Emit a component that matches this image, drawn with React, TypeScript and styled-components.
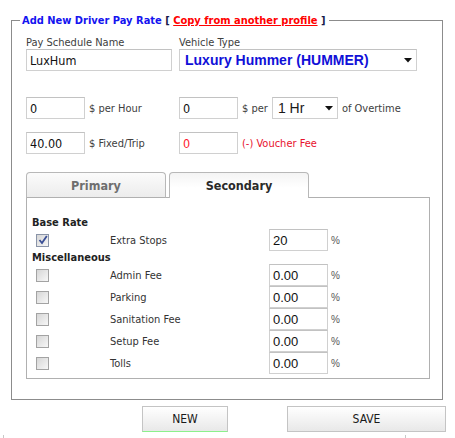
import React from "react";
import styled, { createGlobalStyle } from "styled-components";

const T = '"DejaVu Sans Condensed", "DejaVu Sans", sans-serif';
const A = '"Liberation Sans", Arial, sans-serif';

const Global = createGlobalStyle`
  html, body { margin: 0; padding: 0; background: #fff; }
  body { font-family: ${T}; font-size: 11px; color: #333; }
  * { box-sizing: border-box; }
`;

const Page = styled.div`
  width: 455px;
  height: 438px;
  overflow: hidden;
  padding: 13px 0 0 11px;
`;

const Frame = styled.fieldset`
  margin: 0;
  width: 432px;
  min-width: 0;
  border: 1px solid #8c8c8c;
  padding: 8px 12px 20px 14px;
`;

const Legend = styled.legend`
  font-family: ${T};
  font-weight: bold;
  font-size: 11px;
  line-height: 15px;
  padding: 0 3px 0 2px;
  margin-left: -6px;
  color: #1414f0;
`;

const Bracket = styled.span`
  color: #1a1a4a;
`;

const CopyLink = styled.a`
  color: #ff0000;
  text-decoration: underline;
  cursor: pointer;
`;

const Row = styled.div<{ $top?: number }>`
  display: grid;
  grid-template-columns: 153px 1fr;
  margin-top: ${(p) => p.$top ?? 0}px;
`;

const Field = styled.div`
  display: flex;
  flex-direction: column;
`;

const Cell = styled.div`
  display: flex;
  align-items: center;
  gap: 4px;
`;

const Label = styled.label<{ $red?: boolean }>`
  font-size: 11px;
  line-height: 13px;
  color: ${(p) => (p.$red ? "#e8112d" : "#404040")};
  white-space: nowrap;
`;

const TextInput = styled.input<{ $w: number; $red?: boolean }>`
  width: ${(p) => p.$w}px;
  height: 22px;
  margin: 0;
  border: 1px solid #d0d0d0;
  border-top-color: #c2c2c2;
  padding: 0 3px;
  font-family: ${T};
  font-size: 12.5px;
  color: ${(p) => (p.$red ? "#ff1a2e" : "#111")};
  background: #fff;
  outline: none;
`;

const SelectBox = styled.div<{ $w: number; $strong?: boolean }>`
  width: ${(p) => p.$w}px;
  height: 22px;
  border: 1px solid #d0d0d0;
  border-top-color: #c2c2c2;
  display: flex;
  align-items: center;
  justify-content: space-between;
  padding: 0 4px 0 5px;
  font-family: ${A};
  font-size: 14px;
  font-weight: ${(p) => (p.$strong ? "bold" : "normal")};
  color: ${(p) => (p.$strong ? "#1010d8" : "#1a1a1a")};
  white-space: nowrap;
  background: #fff;
`;

const Caret = () => (
  <svg width="8" height="5" viewBox="0 0 8 5">
    <path d="M0 0 H8 L4 4.5 Z" fill="#111" />
  </svg>
);

const TabBar = styled.div`
  display: flex;
  gap: 3px;
  margin-top: 18px;
  margin-bottom: -1px;
  position: relative;
  z-index: 1;
`;

const Tab = styled.div<{ $active?: boolean }>`
  width: 140px;
  height: 26px;
  border: 1px solid #b8b8b8;
  border-bottom: ${(p) => (p.$active ? "none" : "1px solid #b0b0b0")};
  border-radius: 4px 4px 0 0;
  background: ${(p) =>
    p.$active
      ? "linear-gradient(#f4f4f4, #ffffff 60%)"
      : "linear-gradient(#fbfbfb, #ececec)"};
  display: flex;
  align-items: center;
  justify-content: center;
  padding-bottom: ${(p) => (p.$active ? 1 : 0)}px;
  font-weight: bold;
  font-size: 12.5px;
  color: ${(p) => (p.$active ? "#2a2a2a" : "#6e6e6e")};
`;

const Panel = styled.div`
  width: 404px;
  border: 1px solid #b0b0b0;
  padding: 18px 0 4px 5px;
`;

const Section = styled.div`
  font-weight: bold;
  font-size: 11px;
  line-height: 13px;
  color: #222;
`;

const FeeRow = styled.div`
  display: grid;
  grid-template-columns: 74px 159px 59px auto;
  align-items: center;
  height: 22px;
  padding-left: 4px;
`;

const Check = styled.span<{ $on?: boolean }>`
  width: 13px;
  height: 13px;
  border: 1px solid ${(p) => (p.$on ? "#8a94a8" : "#a3a3a3")};
  background: linear-gradient(135deg, #d6d6d6, #f7f7f7);
  display: flex;
  align-items: center;
  justify-content: center;
`;

const FeeName = styled.span`
  font-size: 11px;
  color: #333;
`;

const PctInput = styled.input`
  width: 59px;
  height: 22px;
  margin: 0;
  border: 1px solid #d0d0d0;
  border-top-color: #c2c2c2;
  padding: 0 3px;
  font-family: ${A};
  font-size: 13px;
  color: #111;
  outline: none;
`;

const Pct = styled.span`
  margin-left: 3px;
  font-family: ${A};
  font-size: 10px;
  color: #555;
`;

const Buttons = styled.div`
  display: flex;
  gap: 59px;
  margin: 6px 0 0 131px;
`;

const Btn = styled.button<{ $w: number; $accent?: boolean }>`
  width: ${(p) => p.$w}px;
  height: 26px;
  margin: 0;
  padding: 0;
  border: 1px solid #c4c4c4;
  border-bottom: 1px solid ${(p) => (p.$accent ? "#8cf08c" : "#c4c4c4")};
  background: linear-gradient(#ffffff, #e8e8e8);
  font-family: ${T};
  font-size: 12px;
  color: #1a1a1a;
`;

const Strip = styled.div`
  margin: 3px 0 0 -8px;
  width: 403px;
  height: 8px;
  border-left: 1px solid #c8c8c8;
  border-right: 1px solid #c8c8c8;
`;

const fees = [
  { name: "Admin Fee", value: "0.00" },
  { name: "Parking", value: "0.00" },
  { name: "Sanitation Fee", value: "0.00" },
  { name: "Setup Fee", value: "0.00" },
  { name: "Tolls", value: "0.00" },
];

const CheckMark = () => (
  <svg width="10" height="10" viewBox="0 0 10 10">
    <path d="M1.5 5 L4 8 L8.8 1" fill="none" stroke="#3a4f96" strokeWidth="1.8" />
  </svg>
);

export default function App() {
  return (
    <Page>
      <Global />
      <Frame>
        <Legend>
          Add New Driver Pay Rate <Bracket>[</Bracket>{" "}
          <CopyLink>Copy from another profile</CopyLink> <Bracket>]</Bracket>
        </Legend>

        <Row>
          <Field>
            <Label>Pay Schedule Name</Label>
            <TextInput $w={146} defaultValue="LuxHum" />
          </Field>
          <Field>
            <Label>Vehicle Type</Label>
            <SelectBox $w={238} $strong>
              <span>Luxury Hummer (HUMMER)</span>
              <Caret />
            </SelectBox>
          </Field>
        </Row>

        <Row $top={26}>
          <Cell>
            <TextInput $w={59} defaultValue="0" />
            <Label>$ per Hour</Label>
          </Cell>
          <Cell>
            <TextInput $w={59} defaultValue="0" />
            <Label>$ per</Label>
            <SelectBox $w={66}>
              <span>1 Hr</span>
              <Caret />
            </SelectBox>
            <Label>of Overtime</Label>
          </Cell>
        </Row>

        <Row $top={13}>
          <Cell>
            <TextInput $w={59} defaultValue="40.00" />
            <Label>$ Fixed/Trip</Label>
          </Cell>
          <Cell>
            <TextInput $w={59} $red defaultValue="0" />
            <Label $red>(-) Voucher Fee</Label>
          </Cell>
        </Row>

        <TabBar>
          <Tab>Primary</Tab>
          <Tab $active>Secondary</Tab>
        </TabBar>
        <Panel>
          <Section>Base Rate</Section>
          <FeeRow>
            <Check $on>
              <CheckMark />
            </Check>
            <FeeName>Extra Stops</FeeName>
            <PctInput defaultValue="20" />
            <Pct>%</Pct>
          </FeeRow>
          <Section>Miscellaneous</Section>
          {fees.map((f) => (
            <FeeRow key={f.name}>
              <Check />
              <FeeName>{f.name}</FeeName>
              <PctInput defaultValue={f.value} />
              <Pct>%</Pct>
            </FeeRow>
          ))}
        </Panel>
      </Frame>
      <Buttons>
        <Btn $w={86} $accent>
          NEW
        </Btn>
        <Btn $w={159}>SAVE</Btn>
      </Buttons>
      <Strip />
    </Page>
  );
}
